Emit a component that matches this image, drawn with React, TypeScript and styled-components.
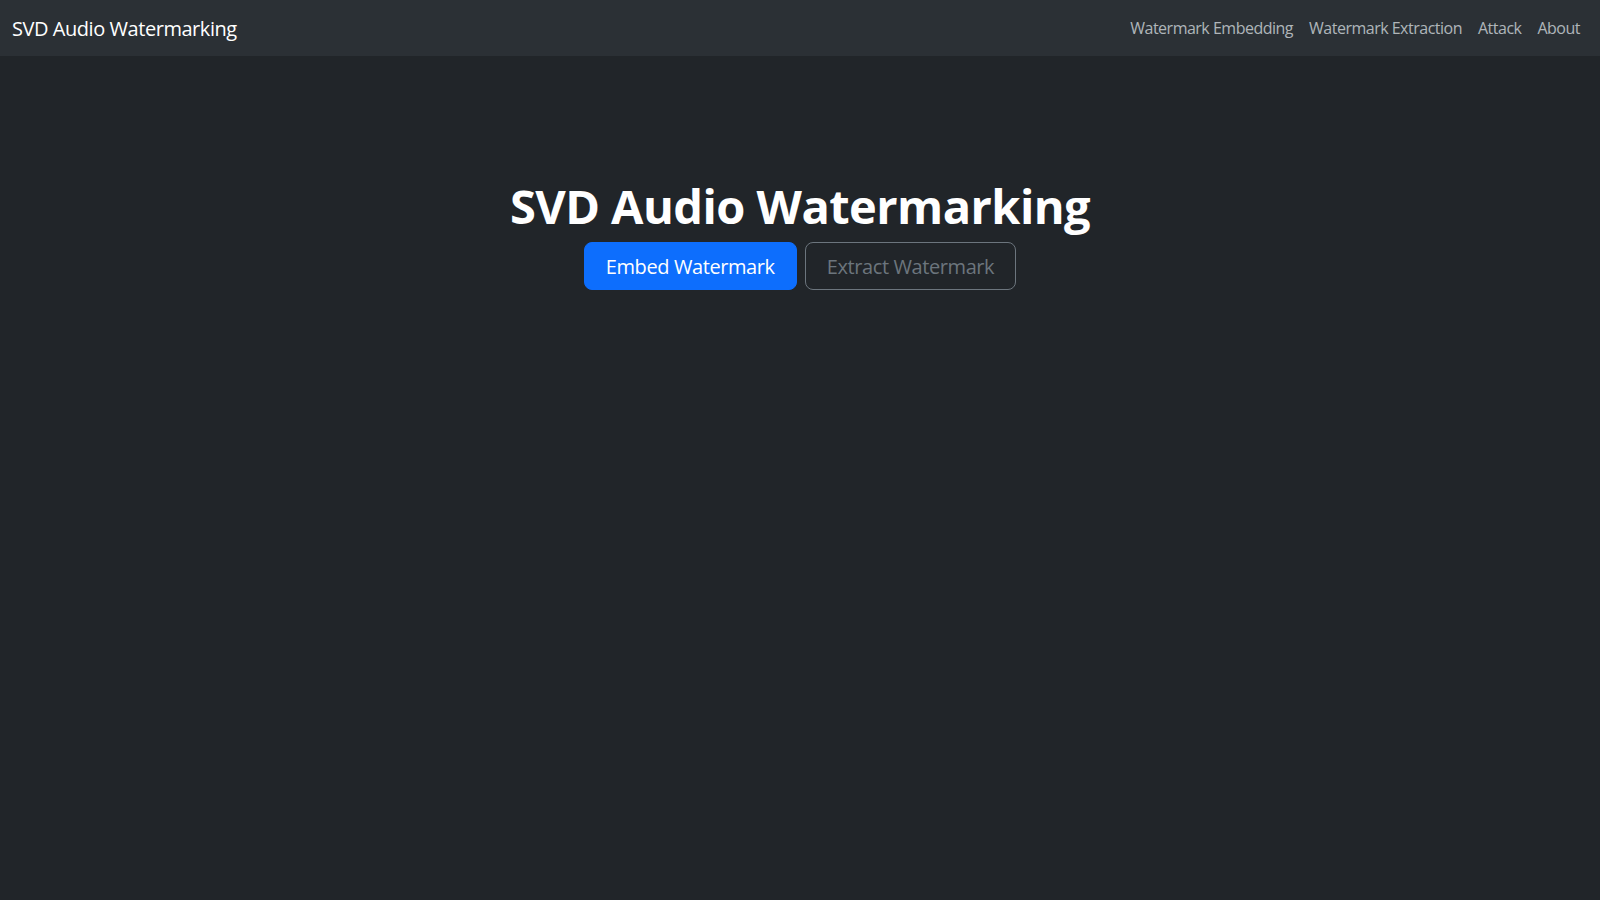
import React from "react";
import styled, { createGlobalStyle } from "styled-components";

const Global = createGlobalStyle`
  html, body { margin: 0; padding: 0; }
  body {
    background: #212529;
    color: #dee2e6;
    font-family: "Open Sans", "Noto Sans", "Liberation Sans", sans-serif;
    min-height: 100vh;
  }
`;

const Navbar = styled.nav`
  height: 56px;
  background: #2b3035;
  display: flex;
  align-items: center;
  justify-content: space-between;
  padding: 0 12px;
  box-sizing: border-box;
`;

const Brand = styled.a`
  font-size: 20px;
  color: #ffffff;
  text-decoration: none;
  letter-spacing: -0.45px;
`;

const NavList = styled.ul`
  display: flex;
  list-style: none;
  margin: 0;
  padding: 0;
`;

const NavLink = styled.a`
  display: block;
  padding: 8px 8px;
  font-size: 16px;
  color: rgba(222, 226, 230, 0.75);
  text-decoration: none;
  letter-spacing: -0.5px;
`;

const Main = styled.main`
  display: flex;
  flex-direction: column;
  align-items: center;
  padding-top: 122px;
`;

const Title = styled.h1`
  margin: 0 0 8px;
  font-size: 47px;
  font-weight: 700;
  line-height: 1.2;
  color: #ffffff;
  letter-spacing: -0.55px;
`;

const ButtonRow = styled.div`
  display: flex;
  gap: 8px;
`;

const Button = styled.button<{ $primary?: boolean }>`
  height: 48px;
  padding: 0 21px;
  font-family: inherit;
  font-size: 20px;
  border-radius: 8px;
  cursor: pointer;
  letter-spacing: -0.4px;
  border: 1px solid ${(p) => (p.$primary ? "#0d6efd" : "#6c757d")};
  background: ${(p) => (p.$primary ? "#0d6efd" : "transparent")};
  color: ${(p) => (p.$primary ? "#ffffff" : "#6c757d")};
`;

export default function App() {
  return (
    <>
      <Global />
      <Navbar>
        <Brand href="#">SVD Audio Watermarking</Brand>
        <NavList>
          <li><NavLink href="#">Watermark Embedding</NavLink></li>
          <li><NavLink href="#">Watermark Extraction</NavLink></li>
          <li><NavLink href="#">Attack</NavLink></li>
          <li><NavLink href="#">About</NavLink></li>
        </NavList>
      </Navbar>
      <Main>
        <Title>SVD Audio Watermarking</Title>
        <ButtonRow>
          <Button $primary>Embed Watermark</Button>
          <Button>Extract Watermark</Button>
        </ButtonRow>
      </Main>
    </>
  );
}
